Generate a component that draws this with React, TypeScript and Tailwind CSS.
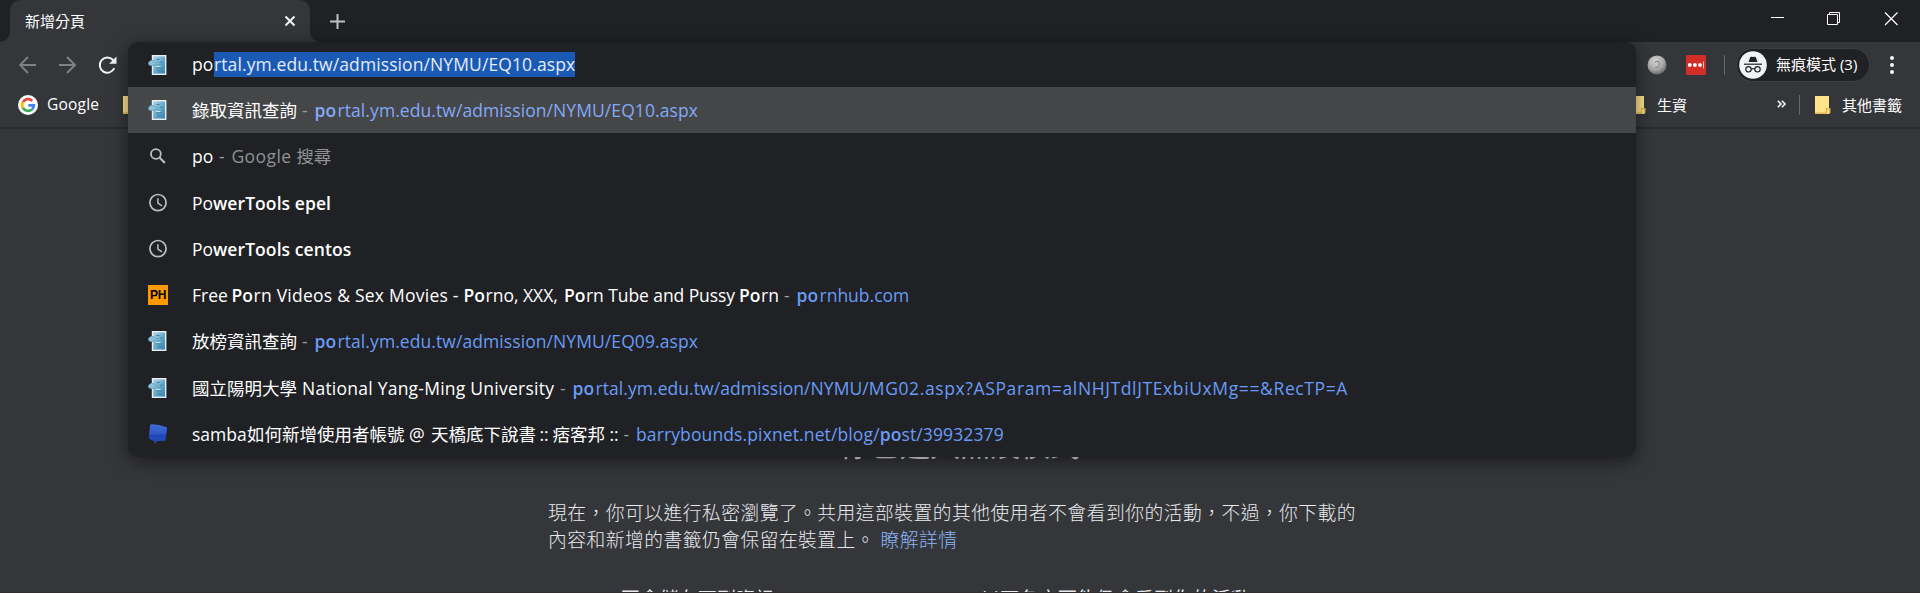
import type { ReactNode } from "react";

function DocIcon() {
  return (
    <svg width="20" height="20" viewBox="0 0 20 20" className="shrink-0">
      <defs>
        <linearGradient id="doc" x1="0" y1="0" x2="1" y2="1">
          <stop offset="0" stopColor="#b4daea" />
          <stop offset="0.5" stopColor="#6aabcc" />
          <stop offset="1" stopColor="#2f7fab" />
        </linearGradient>
      </defs>
      <rect x="4.5" y="0.7" width="13.2" height="18.6" fill="url(#doc)" stroke="#e8f0f3" strokeWidth="1.4" />
      <path d="M0.5 7.5l2-2h3l2 1.6 5 1-.2 1.5-5.2-.5-2 1.4h-3l-1.6-1.2z" fill="#8cc0d8" stroke="#5a9aba" strokeWidth="0.7" />
      <path d="M8.5 4.5h3M12 7.2h3M8 13h6M9.5 15.6h5" stroke="#3f83a8" strokeWidth="1" />
      <path d="M8 11.5h4.5" stroke="#c4e2ee" strokeWidth="1" />
    </svg>
  );
}

function SearchIcon() {
  return (
    <svg width="20" height="20" viewBox="0 0 20 20" fill="none" stroke="#bdbec0" className="shrink-0">
      <circle cx="7.9" cy="8" r="4.9" strokeWidth="1.8" />
      <path d="M11.5 11.6l5.4 5.4" strokeWidth="2.1" />
    </svg>
  );
}

function ClockIcon() {
  return (
    <svg width="20" height="20" viewBox="0 0 20 20" fill="none" stroke="#bdbec0" className="shrink-0">
      <circle cx="10" cy="9.6" r="8.1" strokeWidth="1.7" />
      <path d="M9.9 5.2v5l4 2.6" strokeWidth="1.5" />
    </svg>
  );
}

function BadgeIcon() {
  return (
    <span className="flex size-5 shrink-0 items-center justify-center bg-[#ff9900] font-['Liberation_Sans',sans-serif] text-[12px] leading-none font-bold tracking-[-0.4px] text-black">
      PH
    </span>
  );
}

function BubbleIcon() {
  return (
    <svg width="20" height="20" viewBox="0 0 20 20" className="shrink-0">
      <defs>
        <linearGradient id="bub" x1="0" y1="0" x2="0" y2="1">
          <stop offset="0" stopColor="#3f6cd6" />
          <stop offset="0.5" stopColor="#2f59c6" />
          <stop offset="0.55" stopColor="#1f47b8" />
          <stop offset="1" stopColor="#2650bd" />
        </linearGradient>
      </defs>
      <path
        d="M3.6 0.2C8 0.4 14 1.4 18.3 3c1 0.4 0.8 1.4 0.6 3l-1.2 9.4c-0.2 1.3-1 1.4-2 1.4l-7 0.2c-0.3 1.4-1.2 2.4-2.4 3l0.4-3.2c-2-0.2-3.6-0.8-5-1.9C0.8 14.3 0.9 13.3 1 12L2 2C2.2 0.6 2.6 0.2 3.6 0.2z"
        fill="url(#bub)"
      />
    </svg>
  );
}

function Folder() {
  return (
    <svg width="16" height="18" viewBox="0 0 16 18" className="shrink-0">
      <path d="M0 0h14v12.5h1.2v4.3L14 18H0z" fill="#ffe28a" />
      <path d="M0 17.2h12M11.5 18v-5.3h3.2v4" fill="none" stroke="#dcb44c" strokeWidth="1.2" />
    </svg>
  );
}

const seg = "inline-block whitespace-pre";

function Dash() {
  return <span className="inline-block w-[17.500px] pl-[5px] text-[#9aa0a6]">-</span>;
}

function Row({ icon, active, children }: { icon: ReactNode; active?: boolean; children: ReactNode }) {
  return (
    <div className={"flex min-h-0 flex-1 items-center pl-5 " + (active ? "bg-[#454648]" : "")}>
      {icon}
      <div className="ml-6 flex h-6 items-baseline whitespace-pre leading-6">{children}</div>
    </div>
  );
}

const link = "text-[#699bf7]";

export default function App() {
  return (
    <div
      lang="zh-TW"
      className="relative flex h-[593px] w-[1920px] flex-col overflow-hidden bg-[#35363a] font-['Open_Sans','Noto_Sans_CJK_TC',sans-serif] text-white"
    >
      {/* Tab strip */}
      <div className="flex h-[42px] shrink-0 bg-[#202124]">
        <svg width="10" height="42" className="shrink-0">
          <path d="M10 32v10H0a10 10 0 0 0 10-10z" fill="#35363a" />
        </svg>
        <div className="flex w-[300px] items-center justify-between rounded-t-[10px] bg-[#35363a] pr-[14px] pl-[15px]">
          <span className="text-[15px]">新增分頁</span>
          <svg width="12" height="12" viewBox="0 0 12 12" stroke="#f4f5f6" strokeWidth="2">
            <path d="M1.5 1.5l9 9M10.5 1.5l-9 9" />
          </svg>
        </div>
        <svg width="10" height="42" className="shrink-0">
          <path d="M0 32v10h10a10 10 0 0 1-10-10z" fill="#35363a" />
        </svg>
        <div className="flex grow items-center justify-between pr-[22px] pl-[10px]">
          <svg width="15" height="15" viewBox="0 0 15 15" stroke="#bfc1c5" strokeWidth="2">
            <path d="M7.5 0v15M0 7.5h15" />
          </svg>
          <svg width="128" height="14" viewBox="0 0 128 14" fill="none" stroke="#fff" className="mb-[5px]">
            <path d="M1 5.5h13" strokeWidth="1" />
            <path d="M57.500 2.500h10v10h-10zM59.500 2.500v-2h10v10h-2" strokeWidth="1" />
            <path d="M115 0.500l12.500 12.500M127.500 0.500l-12.500 12.500" strokeWidth="1.200" />
          </svg>
        </div>
      </div>

      {/* Toolbar */}
      <div className="flex h-[45px] shrink-0 items-center justify-between pr-[25px] pl-[19px]">
        <svg width="100" height="20" viewBox="0 0 100 20" fill="none">
          <path d="M17 10H1.5M9 2L1 10l8 8" stroke="#7f8185" strokeWidth="1.9" />
          <path d="M40 10h15.500M48 2l8 8-8 8" stroke="#7f8185" strokeWidth="1.9" />
          <path d="M95.300 13.200A7.600 7.600 0 1 1 93.800 4.800L96 7" stroke="#f1f3f4" strokeWidth="2" />
          <path d="M97.500 1.500v7.300h-7.300z" fill="#f1f3f4" />
        </svg>
        <div className="flex items-center">
          <svg width="20" height="20" viewBox="0 0 20 20">
            <defs>
              <radialGradient id="ball" cx="0.4" cy="0.3" r="0.75">
                <stop offset="0" stopColor="#d8d8d8" />
                <stop offset="0.6" stopColor="#a6a6a6" />
                <stop offset="1" stopColor="#606060" />
              </radialGradient>
            </defs>
            <circle cx="10" cy="10" r="9.5" fill="url(#ball)" />
            <path d="M7.500 7.500c2-2 5-1.500 5 1.500s-2.500 4-4.500 3.500" fill="none" stroke="#8e8e8e" strokeWidth="1.200" />
            <circle cx="9.800" cy="9.500" r="1.200" fill="#c4c4c4" />
          </svg>
          <svg width="20" height="20" viewBox="0 0 20 20" className="ml-[19px]">
            <rect width="20" height="20" rx="1.5" fill="#d32d27" />
            <circle cx="3.8" cy="10" r="1.9" fill="#fff" />
            <circle cx="8.9" cy="10" r="1.9" fill="#fff" />
            <circle cx="14" cy="10" r="1.9" fill="#fff" />
            <path d="M17.5 6.5v7" stroke="#f0c0be" strokeWidth="1" />
          </svg>
          <div className="ml-[18px] h-5 w-px bg-[#66676b]" />
          <div className="ml-[11px] flex h-[34px] w-[134px] items-center rounded-full border border-[#3e3f43] bg-[#202124] pl-[2px]">
            <svg width="28" height="28" viewBox="0 0 28 28" className="shrink-0">
              <circle cx="14" cy="14" r="13.8" fill="#f1f3f4" />
              <path d="M9.5 11l1.7-4.700c0.200-0.600 0.700-0.800 1.300-0.600l1.500 0.400 1.500-0.400c0.600-0.200 1.100 0 1.300 0.600L18.500 11z" fill="#202124" />
              <path d="M5 13.200h18" stroke="#202124" strokeWidth="1.200" />
              <g fill="none" stroke="#202124" strokeWidth="1.200">
                <circle cx="9.500" cy="18.300" r="2.700" />
                <circle cx="18.500" cy="18.300" r="2.700" />
                <path d="M12.200 18q1.800-0.800 3.600 0" />
              </g>
            </svg>
            <span className="ml-[9px] text-[15px] whitespace-pre">無痕模式 (3)</span>
          </div>
          <svg width="6" height="20" viewBox="0 0 6 20" fill="#f1f3f4" className="ml-[19px]">
            <circle cx="3" cy="3" r="2" />
            <circle cx="3" cy="10" r="2" />
            <circle cx="3" cy="17" r="2" />
          </svg>
        </div>
      </div>

      {/* Bookmarks bar */}
      <div className="flex h-[40px] shrink-0 items-center justify-between pr-[18px] pb-[4px] pl-[18px]">
        <div className="flex items-center">
          <svg width="20" height="20" viewBox="0 0 20 20" fill="none" strokeWidth="2.7">
            <circle cx="10" cy="10" r="10" fill="#fff" />
            <path d="M14.300 5.900A5.900 5.900 0 0 0 4.900 7.100" stroke="#ea4335" />
            <path d="M4.900 7.100a5.900 5.900 0 0 0 0 5.800" stroke="#fbbc05" />
            <path d="M4.900 12.900a5.900 5.900 0 0 0 9 1.500" stroke="#34a853" />
            <path d="M13.900 14.400a5.900 5.900 0 0 0 2-4.100H10.300" stroke="#4285f4" />
          </svg>
          <span className="ml-[9px] w-[76px] text-[15.500px] tracking-[0.200px]">Google</span>
          <Folder />
        </div>
        <div className="flex items-center text-[15px]">
          <Folder />
          <span className="ml-[11px] w-[119px]">生資</span>
          <svg width="9" height="8" viewBox="0 0 9 8" fill="none" stroke="#f1f3f4" strokeWidth="1.6" className="mb-[2px] ml-px">
            <path d="M0.8 0.8L4 4 0.8 7.2M4.8 0.8L8 4 4.8 7.2" />
          </svg>
          <div className="ml-[13px] h-5 w-px bg-[#66676b]" />
          <div className="ml-[15px] flex items-center">
            <Folder />
            <span className="ml-[11px]">其他書籤</span>
          </div>
        </div>
      </div>
      <div className="h-[2px] shrink-0 bg-[#2a2b2e]" />

      {/* Incognito page */}
      <div className="flex min-h-0 grow flex-col overflow-hidden border-b border-[#2e2c2c]">
        <div className="mx-auto w-[824px] shrink-0 text-[18.75px] text-[#e8eaed]">
          <h1 className="mt-[297px] text-center text-[30px] leading-[38px]">你已進入無痕模式</h1>
          <p className="mt-[35px] font-light leading-[27px] tracking-[0.49px] whitespace-pre">
            {"現在，你可以進行私密瀏覽了。共用這部裝置的其他使用者不會看到你的活動，不過，你下載的\n內容和新增的書籤仍會保留在裝置上。 "}
            <span className="text-[#8ab4f8]">瞭解詳情</span>
          </p>
          <div className="mt-[32px] flex leading-[27px] tracking-[0.49px]">
            <span className="w-[433px]">
              <span className="inline-block w-[73px]">Chrome</span>不會儲存下列資訊：
            </span>
            <span>以下各方可能仍會看到你的活動：</span>
          </div>
        </div>
      </div>

      {/* Omnibox popup */}
      <div className="absolute top-[42px] left-[128px] flex h-[415px] w-[1508px] flex-col overflow-hidden rounded-[10px] bg-[#202124] text-[17.5px] shadow-[0_4px_18px_rgba(0,0,0,0.5)]">
        <div className="flex h-[45px] shrink-0 items-center pl-5">
          <DocIcon />
          <div className="ml-6 flex h-[25px] items-center tracking-[0.1px]">
            <span className="w-[22px]">po</span>
            <span className="h-[25px] w-[361px] bg-[#1b5ab4] leading-[24px] text-[#e3ebf5]">rtal.ym.edu.tw/admission/NYMU/EQ10.aspx</span>
          </div>
        </div>
        <div className="flex grow flex-col">
          <Row active icon={<DocIcon />}>
            <span className="w-[105px]">錄取資訊查詢</span>
            <Dash />
            <span className="tracking-[0.08px] text-[#82aaf8]">
              <b className="inline-block w-[23px] font-semibold">po</b>rtal.ym.edu.tw/admission/NYMU/EQ10.aspx
            </span>
          </Row>
          <Row icon={<SearchIcon />}>
            <span className="w-[22px]">po</span>
            <Dash />
            <span className="tracking-[0.4px] text-[#8f9195]">Google </span>
            <span className="text-[#8f9195]">搜尋</span>
          </Row>
          <Row icon={<ClockIcon />}>
            <span className="w-[21px]">Po</span>
            <b className="font-semibold tracking-[0.08px]">werTools epel</b>
          </Row>
          <Row icon={<ClockIcon />}>
            <span className="w-[21px]">Po</span>
            <b className="font-semibold tracking-[0.08px]">werTools centos</b>
          </Row>
          <Row icon={<BadgeIcon />}>
            <span className={seg + " w-[39.500px]"}>Free </span>
            <b className={seg + " w-[22px] font-semibold"}>Po</b>
            <span className={seg + " w-[210px] tracking-[0.240px]"}>rn Videos &amp; Sex Movies - </span>
            <b className={seg + " w-[22px] font-semibold"}>Po</b>
            <span className={seg + " w-[78.500px]"}>rno, XXX, </span>
            <b className={seg + " w-[22px] font-semibold"}>Po</b>
            <span className={seg + " w-[153px] tracking-[-0.080px]"}>rn Tube and Pussy </span>
            <b className={seg + " w-[22px] font-semibold"}>Po</b>
            <span className={seg + " w-[18px]"}>rn</span>
            <Dash />
            <span className={link}>
              <b className="inline-block w-[23px] font-semibold">po</b>rnhub.com
            </span>
          </Row>
          <Row icon={<DocIcon />}>
            <span className="w-[105px]">放榜資訊查詢</span>
            <Dash />
            <span className={link + " tracking-[0.080px]"}>
              <b className="inline-block w-[23px] font-semibold">po</b>rtal.ym.edu.tw/admission/NYMU/EQ09.aspx
            </span>
          </Row>
          <Row icon={<DocIcon />}>
            <span className="w-[110px]">國立陽明大學</span>
            <span className="w-[253px] tracking-[0.240px]">National Yang-Ming University</span>
            <Dash />
            <span className={link}>
              <b className="inline-block w-[23px] font-semibold">po</b>
              <span className="tracking-[0.060px]">rtal.ym.edu.tw/admission/NYMU/</span>
              <span className="tracking-[0.620px]">MG02.aspx?ASParam=alNHJTdlJTExbiUxMg==&amp;RecTP=A</span>
            </span>
          </Row>
          <Row icon={<BubbleIcon />}>
            <span className="w-[55px]">samba</span>
            <span className="w-[162px]">如何新增使用者帳號</span>
            <span className="w-[22px]">@</span>
            <span className="w-[108.500px]">天橋底下說書</span>
            <span className="w-[13px]">::</span>
            <span className="w-[57px]">痞客邦</span>
            <span className="w-[9px]">::</span>
            <Dash />
            <span className={link + " tracking-[0.120px]"}>
              barrybounds.pixnet.net/blog/<b className="font-semibold">po</b>st/39932379
            </span>
          </Row>
        </div>
      </div>
    </div>
  );
}
